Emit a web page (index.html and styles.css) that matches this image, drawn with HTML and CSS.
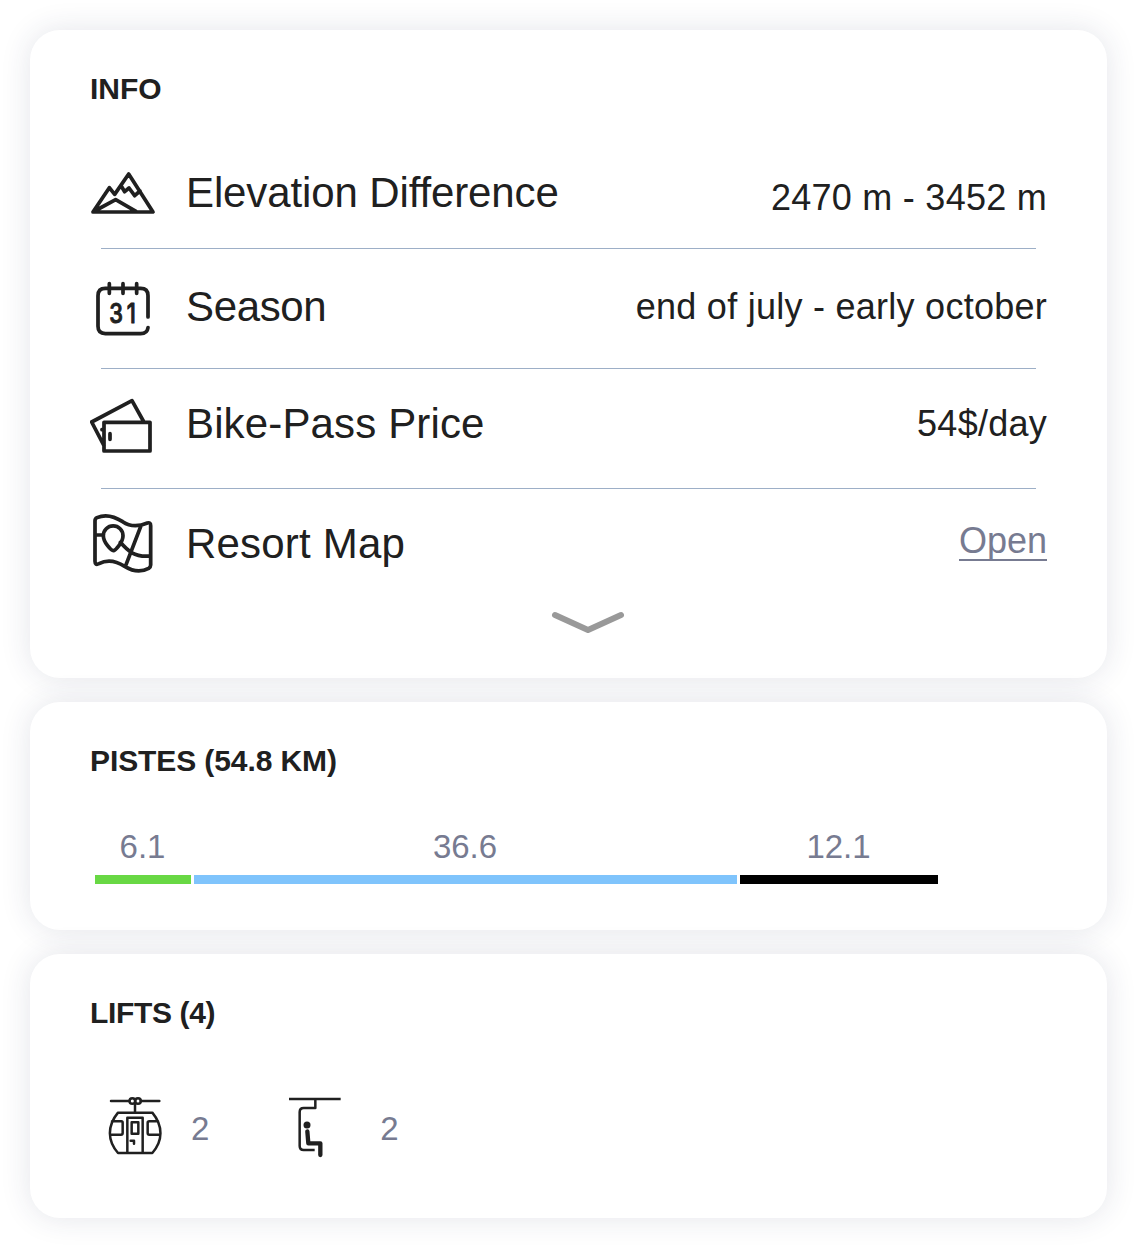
FILE: index.html
```html
<!DOCTYPE html>
<html lang="en">
<head>
<meta charset="utf-8">
<title>Resort info</title>
<link rel="stylesheet" href="styles.css">
</head>
<body>
<main class="page">
  <section class="card card-info">
    <h2 class="heading">INFO</h2>
    <ul class="rows">
      <li class="row row-elevation">
        <svg class="icon" width="66" height="48" viewBox="30 24 198 144">
          <path d="M39 156L88 83L104 103L146 42L219 156ZM44 153L107 119L168 154M125 80L134 95L147 84L164 107L180 93"/>
        </svg>
        <span class="label">Elevation Difference</span>
        <span class="value">2470 m - 3452 m</span>
      </li>
      <li class="row row-season">
        <svg class="icon" width="66" height="60" viewBox="30 30 198 180">
          <path d="M204 141V77Q204 55 182 55H76Q54 55 54 77V169Q54 191 76 191H182Q202 191 204 173M88 41V70M129 41V70M170 41V70"/>
          <text class="date" transform="translate(88 159) scale(.82 1)">3</text>
          <text class="date" transform="translate(140 159) scale(.82 1)">1</text>
        </svg>
        <span class="label">Season</span>
        <span class="value">end of july - early october</span>
      </li>
      <li class="row row-price">
        <svg class="icon" width="66" height="60" viewBox="30 33 198 180">
          <path d="M72 112H210V198H72ZM72 182L35 111L156 47L190 108M90 146V163M66 134L72 133"/>
        </svg>
        <span class="label">Bike-Pass Price</span>
        <span class="value">54$/day</span>
      </li>
      <li class="row row-map">
        <svg class="icon" width="66" height="66" viewBox="30 30 198 198">
          <path d="M45 62Q45 56 51 53C75 42 102 48 128 65C151 81 174 81 202 69Q212 66 212 77V195Q212 201 206 205C182 218 158 214 134 199C109 183 83 177 57 191Q45 197 45 184ZM100 152C94 152 70 127 70 107A29 29 0 0 1 129 107C129 127 106 152 100 152ZM46 105H70M121 127C143 152 162 172 210 168M182 80L137 197"/>
        </svg>
        <span class="label">Resort Map</span>
        <a class="value link">Open</a>
      </li>
    </ul>
    <svg class="chevron" width="74" height="24" viewBox="0 0 74 24"><path d="M4 5L37 20L70 5"/></svg>
  </section>

  <section class="card card-pistes">
    <h2 class="heading">PISTES (54.8 KM)</h2>
    <div class="pistes">
      <div class="piste easy"><span>6.1</span></div>
      <div class="piste medium"><span>36.6</span></div>
      <div class="piste hard"><span>12.1</span></div>
    </div>
  </section>

  <section class="card card-lifts">
    <h2 class="heading">LIFTS (4)</h2>
    <div class="lifts">
      <div class="lift">
        <svg class="icon thin" width="54" height="62" viewBox="39 33 162 186">
          <path d="M48 48H103M137 48H193M120 55V82M69 83H172C205 123 204 168 172 204H69C37 168 36 123 69 83ZM97 203V98H143V203M110 112H130V146H110ZM51 109H79Q83 109 83 113V144Q83 149 78 149H45M189 109H163Q158 109 158 113V144Q158 149 163 149H195M107 167H117V176"/>
          <circle cx="112" cy="48" r="8.5"/><circle cx="129" cy="48" r="8.5"/>
        </svg>
        <span>2</span>
      </div>
      <div class="lift">
        <svg class="icon thin chair" width="54" height="62" viewBox="39 33 162 186">
          <path d="M42 42H197M121 43V69H86Q74 69 74 81V183Q74 195 86 195H119"/>
          <circle class="head" cx="96" cy="120" r="10.5"/>
          <path class="rider" d="M97 139L100 175H136V210"/>
        </svg>
        <span>2</span>
      </div>
    </div>
  </section>
</main>
</body>
</html>
```
FILE: styles.css
```css
* { box-sizing: border-box; }
body {
  margin: 0;
  background: #fff;
  color: #202020;
  font-family: "Liberation Sans", Arial, sans-serif;
}
.page {
  display: flex;
  flex-direction: column;
  gap: 24px;
  width: 1137px;
  height: 1248px;
  padding: 30px;
}
.card {
  padding: 41px 60px 0;
  border-radius: 30px;
  background: #fff;
  box-shadow: 0 0 30px rgba(40, 48, 85, 0.125);
}
.card-info { height: 648px; }
.card-pistes { height: 228px; }
.card-lifts { height: 264px; }
.heading {
  margin: 0;
  font-size: 30px;
  line-height: 36px;
  font-weight: 700;
}
.card-pistes .heading { letter-spacing: -0.1px; }
.card-lifts .heading { letter-spacing: -0.35px; }
.rows {
  margin: 22px 0 0;
  padding: 0;
  list-style: none;
}
.row {
  display: grid;
  grid-template-columns: 96px 1fr auto;
  grid-template-rows: 119px 1px;
  align-items: start;
  height: 120px;
}
.row:not(:last-child)::after {
  content: "";
  grid-column: 1 / -1;
  align-self: end;
  height: 1px;
  margin: 0 11px;
  background: #9dafc7;
}
.icon {
  display: block;
  fill: none;
  stroke: #202020;
  stroke-width: 11.2;
  stroke-linecap: round;
  stroke-linejoin: round;
}
.date {
  fill: #202020;
  stroke-width: 3;
  font: 500 80px Inter, sans-serif;
}
.label {
  font-size: 42px;
  line-height: 48px;
}
.value {
  font-size: 36px;
  line-height: 42px;
  letter-spacing: 0.26px;
}
.row-elevation .icon { margin-top: 39px; }
.row-elevation .label { margin-top: 40px; letter-spacing: -0.12px; }
.row-elevation .value { margin-top: 48px; }
.row-season .icon { margin-top: 31px; }
.row-season .label { margin-top: 34px; letter-spacing: -0.35px; }
.row-season .value { margin-top: 37px; }
.row-price .icon { margin-top: 27px; }
.row-price .label { margin-top: 31px; letter-spacing: 0.14px; }
.row-price .value { margin-top: 34px; }
.row-map .icon { margin-top: 21px; }
.row-map .label { margin-top: 31px; letter-spacing: 0.2px; }
.row-map .value { margin-top: 31px; }
.value.link {
  height: 41px;
  border-bottom: 2px solid #777b91;
  color: #777b91;
  letter-spacing: 0;
}
.chevron {
  display: block;
  margin: 1px auto 0;
  position: relative;
  left: 19px;
  fill: none;
  stroke: #999;
  stroke-width: 6;
  stroke-linecap: round;
  stroke-linejoin: round;
}
.pistes {
  display: flex;
  gap: 3px;
  margin: 48px 0 0 4.5px;
}
.piste {
  display: flex;
  justify-content: center;
  height: 57px;
  border-bottom: 9px solid;
}
.piste span, .lift span {
  color: #777b91;
  font-size: 33px;
  line-height: 40px;
}
.easy { width: 96px; border-color: #68d844; }
.medium { width: 543px; border-color: #7fc4fc; }
.hard { width: 198px; border-color: #000; }
.lifts {
  display: flex;
  gap: 79px;
  margin: 65px 0 0 18px;
}
.lift {
  display: flex;
  align-items: center;
  gap: 29px;
}
.lift span { padding-top: 4px; }
.lift:last-child { gap: 38px; }
.thin { stroke-width: 7.5; }
.chair { stroke-linecap: butt; }
.head { fill: #202020; stroke: none; }
.rider {
  stroke-width: 13;
  stroke-linecap: round;
}
```
